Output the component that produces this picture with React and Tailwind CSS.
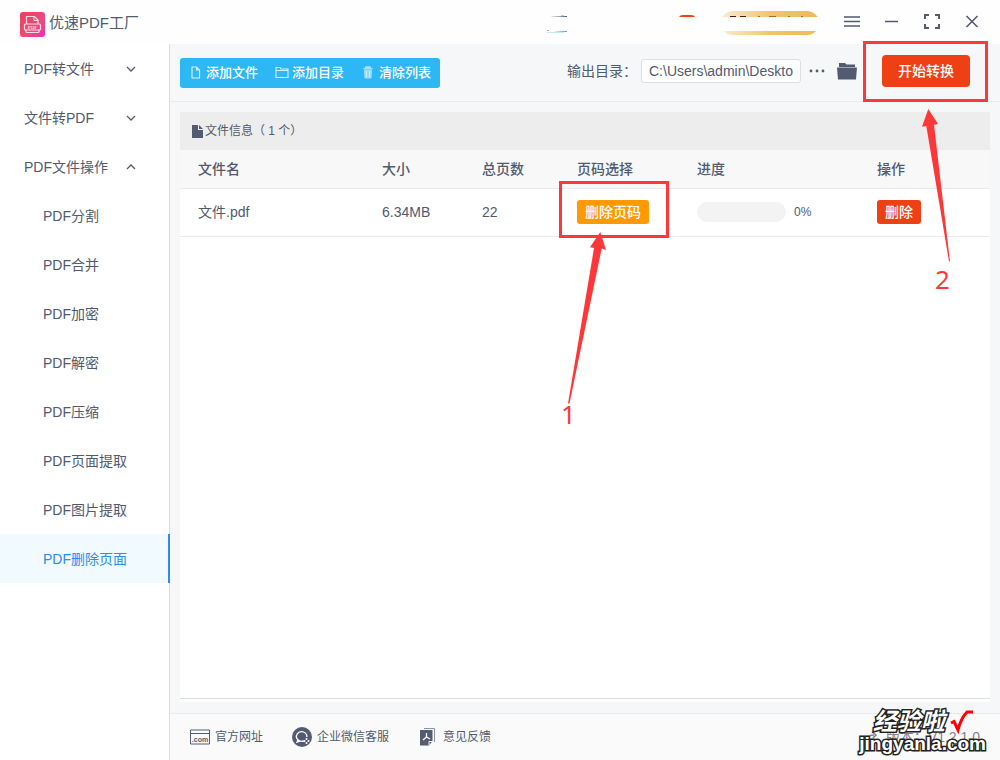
import clsx from "clsx";

const FONT = "font-['Liberation_Sans','Noto_Sans_CJK_SC',sans-serif]";

const menus = [
    { label: "PDF转文件", open: false },
    { label: "文件转PDF", open: false },
    { label: "PDF文件操作", open: true },
];

const operations = [
    "PDF分割",
    "PDF合并",
    "PDF加密",
    "PDF解密",
    "PDF压缩",
    "PDF页面提取",
    "PDF图片提取",
    "PDF删除页面",
];

const files = [
    { name: "文件.pdf", size: "6.34MB", pages: 22, progress: 0 },
];

function Logo() {
    return (
        <svg width="25" height="25" viewBox="0 0 25 25" fill="none">
            <defs>
                <linearGradient id="logo" x1="0" y1="0" x2="1" y2="1">
                    <stop offset="0" stopColor="#e8405c" />
                    <stop offset="0.6" stopColor="#ef4a7a" />
                    <stop offset="1" stopColor="#ee2fb0" />
                </linearGradient>
            </defs>
            <rect width="25" height="25" rx="3" fill="url(#logo)" />
            <path d="M6.5 12V4.5H14.5L18 8V12" stroke="#fbdde4" strokeWidth="1.2" />
            <path d="M14 4.5V8.5H18" stroke="#fbdde4" />
            <rect x="4.5" y="12" width="16" height="6" rx="1" stroke="#fbdde4" strokeWidth="1.2" />
            <path d="M6 18V19.5Q6 20.5 7 20.5H18Q19 20.5 19 19.5V18" stroke="#fbdde4" strokeWidth="1.2" />
            <text x="12.5" y="17" textAnchor="middle" fontSize="5" fontWeight="700" fontFamily="Liberation Serif" fill="#fbdde4">PDF</text>
        </svg>
    );
}

function Chevron({ up }) {
    return (
        <svg width="10" height="6" viewBox="0 0 10 6" fill="none" stroke="#535b72" strokeWidth="1.3">
            <path d={up ? "M1 5L5 1L9 5" : "M1 1L5 5L9 1"} />
        </svg>
    );
}

function Header() {
    return (
        <header className="flex h-11 items-center bg-[#fefefe] pr-5 pl-5">
            <div className="flex items-center gap-1 pt-1">
                <Logo />
                <h1 className="pb-[2px] text-[15px] leading-5">优速PDF工厂</h1>
            </div>
            <div className="ml-auto flex items-center">
                <svg width="274" height="24" viewBox="0 0 274 24" fill="none" className="mt-[2px]" aria-hidden="true">
                    <defs>
                        <linearGradient id="vip" x1="0" y1="0" x2="1" y2="0">
                            <stop offset="0" stopColor="#fbecd0" />
                            <stop offset="0.5" stopColor="#f1c56f" />
                            <stop offset="1" stopColor="#edb957" />
                        </linearGradient>
                        <linearGradient id="dark" x1="0" y1="0" x2="1" y2="0">
                            <stop offset="0" stopColor="#eef0f2" />
                            <stop offset="1" stopColor="#4d6077" />
                        </linearGradient>
                        <linearGradient id="teal" x1="0" y1="0" x2="1" y2="0">
                            <stop offset="0" stopColor="#d6eeee" />
                            <stop offset="1" stopColor="#5f9da3" />
                        </linearGradient>
                    </defs>
                    <rect x="6" y="5" width="16" height="1" fill="url(#dark)" />
                    <rect x="16" y="4" width="3" height="1" fill="#c3cbd3" />
                    <rect x="2" y="19" width="2" height="1" fill="#8cc3c0" />
                    <rect x="10" y="20" width="12" height="1" fill="url(#teal)" />
                    <rect x="2" y="21" width="17" height="1" fill="#c8ebe9" />
                    <path d="M134 6Q135 4 138 4H146Q149 4 150 6Z" fill="#ec3f14" />
                    <rect x="176" y="0" width="98" height="24" rx="12" fill="url(#vip)" />
                    <path d="M185 5.500H191M195 5.500H201" stroke="#4b1512" />
                    <path d="M213 5.500H215M224 5.500H231M243 5.500H245M256 5.500H258" stroke="#96703a" />
                    <rect x="150" y="6" width="124" height="14" fill="#fefefe" />
                </svg>
                <div className="ml-[25px] flex items-center gap-6 text-[#535b72]">
                    <button type="button" aria-label="菜单">
                        <svg width="16" height="16" viewBox="0 0 16 16" stroke="currentColor" strokeWidth="1.500">
                            <path d="M0 3H16M0 7.500H16M0 12H16" />
                        </svg>
                    </button>
                    <button type="button" aria-label="最小化">
                        <svg width="16" height="16" viewBox="0 0 16 16" stroke="currentColor" strokeWidth="1.500">
                            <path d="M1 7.500H14" />
                        </svg>
                    </button>
                    <button type="button" aria-label="最大化">
                        <svg width="16" height="16" viewBox="0 0 16 16" fill="none" stroke="currentColor" strokeWidth="2">
                            <path d="M1 5V1H5M11 1H15V5M15 10V14H11M5 14H1V10" />
                        </svg>
                    </button>
                    <button type="button" aria-label="关闭">
                        <svg width="16" height="16" viewBox="0 0 16 16" stroke="currentColor" strokeWidth="1.600">
                            <path d="M2.500 2L13.500 13M13.500 2L2.500 13" />
                        </svg>
                    </button>
                </div>
            </div>
        </header>
    );
}

function Sidebar() {
    return (
        <nav className="w-[170px] shrink-0 border-r border-[#dcdee2] bg-white text-sm">
            {menus.map((menu) => (
                <button key={menu.label} type="button" aria-expanded={menu.open} className="flex h-[49px] w-full items-center justify-between pr-[33px] pl-6">
                    {menu.label}
                    <Chevron up={menu.open} />
                </button>
            ))}
            <ul>
                {operations.map((op) => (
                    <li key={op}>
                        <a
                            href="#"
                            className={clsx(
                                "flex h-[49px] items-center pl-[43px]",
                                op === "PDF删除页面" && "-mr-px border-r-2 border-[#2d8cf0] bg-[#f0faff] text-[#2d8cf0]"
                            )}
                        >
                            {op}
                        </a>
                    </li>
                ))}
            </ul>
        </nav>
    );
}

function Toolbar() {
    return (
        <div className="flex h-[58px] shrink-0 items-center border-b border-[#e8eaec] pr-[30px] pl-[10px]">
            <div className="flex h-[30px] items-center gap-[17px] rounded-[3px] bg-[#2db7f5] pr-[9px] pl-2 text-[13px] font-medium text-white">
                <button type="button" className="flex items-center gap-1">
                    <svg width="14" height="13" viewBox="0 0 14 13" fill="none" stroke="#d5f1fd" strokeWidth="1.200">
                        <path d="M4 1H8.500L11.500 4V12H4ZM8.500 1V4H11.500" />
                    </svg>
                    添加文件
                </button>
                <button type="button" className="flex items-center gap-[3px]">
                    <svg width="14" height="13" viewBox="0 0 14 13" fill="none" stroke="#d5f1fd" strokeWidth="1.100">
                        <path d="M1 11.500V1.500H5L6 3H13V11.500ZM1 4.500H13" />
                    </svg>
                    添加目录
                </button>
                <button type="button" className="flex items-center gap-1">
                    <svg width="14" height="13" viewBox="0 0 14 13" fill="none" stroke="#a9e1fb">
                        <path d="M2.500 2.500H11.500M5 2V1H9V2" strokeWidth="1.400" />
                        <path d="M3.500 4H10.500L10 12H4Z" fill="#8fd8fa" />
                        <path d="M5.500 5V11M8.500 5V11" stroke="#c9edfd" />
                    </svg>
                    清除列表
                </button>
            </div>
            <div className="mb-1 ml-auto flex items-center">
                <label htmlFor="output" className="mr-1 text-sm">输出目录：</label>
                <input
                    id="output"
                    readOnly
                    defaultValue="C:\Users\admin\Deskto"
                    className="h-6 w-40 rounded-[3px] border border-[#dcdee2] bg-white px-[7px] text-sm"
                />
                <button type="button" aria-label="更多" className="ml-2">
                    <svg width="16" height="4" viewBox="0 0 16 4" fill="#535b72">
                        <circle cx="2" cy="2" r="1.400" />
                        <circle cx="8" cy="2" r="1.400" />
                        <circle cx="14" cy="2" r="1.400" />
                    </svg>
                </button>
                <button type="button" aria-label="打开目录" className="ml-3">
                    <svg width="20" height="18" viewBox="0 0 20 18" fill="#535b72">
                        <path d="M2 1H8L9.500 2.500H18V5H2Z" />
                        <path d="M0 5.500H20L19 17.500H1Z" />
                    </svg>
                </button>
                <div className="relative ml-[25px]">
                    <button type="button" className="block h-8 w-[88px] rounded-[4px] bg-[#ee4014] text-sm font-medium text-white">开始转换</button>
                    <div className="absolute -top-[14px] -left-[19px] h-[61px] w-[125px] border-3 border-[#fd3838]" />
                    <svg className="absolute top-[54px] left-[40px]" width="30" height="154" viewBox="0 0 30 154" fill="#fd3838">
                        <path d="M6.300 0L16 15L12 15.700L28 152.500H27L4.300 17L0 17.700Z" />
                    </svg>
                    <span className="absolute top-[206px] left-[53px] font-['Noto_Sans'] text-[26px] leading-9 text-[#fd3838]">2</span>
                </div>
            </div>
        </div>
    );
}

function FileTable() {
    return (
        <table className="w-full table-fixed text-left text-sm">
            <colgroup>
                <col className="w-[184px]" />
                <col className="w-[100px]" />
                <col className="w-[95px]" />
                <col className="w-[120px]" />
                <col />
                <col className="w-[131px]" />
            </colgroup>
            <thead className="bg-[#f8f8f9]">
                <tr className="h-[38px] border-b border-[#e8eaec]">
                    {["文件名", "大小", "总页数", "页码选择", "进度", "操作"].map((title) => (
                        <th key={title} className="pl-[18px] font-medium">{title}</th>
                    ))}
                </tr>
            </thead>
            <tbody>
                {files.map((file) => (
                    <tr key={file.name} className="h-12 border-b border-[#e8eaec]">
                        <td className="pl-[18px]">{file.name}</td>
                        <td className="pl-[18px]">{file.size}</td>
                        <td className="pl-[18px]">{file.pages}</td>
                        <td className="pl-[18px]">
                            <div className="relative w-[72px]">
                                <button type="button" className="block h-6 w-full rounded-[3px] bg-[#f90] font-medium text-white">删除页码</button>
                                <div className="absolute -top-[19px] -left-[18px] h-[57px] w-[110px] border-3 border-[#fd3838]" />
                                <svg className="absolute top-8 -left-[10px]" width="40" height="173" viewBox="0 0 40 173" fill="#fd3838">
                                    <path d="M33.300 0L39 18L34.700 16.500L2.500 171.500H1L27 16L23 15.300Z" />
                                </svg>
                                <span className="absolute top-[196px] -left-[16px] font-['Noto_Sans'] text-[26px] leading-9 text-[#fd3838]">1</span>
                            </div>
                        </td>
                        <td className="pl-[18px]">
                            <div className="flex items-center gap-2">
                                <div className="h-5 w-[89px] overflow-hidden rounded-full bg-[#f3f3f3]">
                                    <div className="h-full bg-[#2db7f5]" style={{ width: `${file.progress}%` }} />
                                </div>
                                <span className="text-xs">{file.progress}%</span>
                            </div>
                        </td>
                        <td className="pl-[18px]">
                            <button type="button" className="block h-6 w-11 rounded-[3px] bg-[#ee4014] font-medium text-white">删除</button>
                        </td>
                    </tr>
                ))}
            </tbody>
        </table>
    );
}

function Footer() {
    return (
        <footer className="relative flex h-[47px] shrink-0 items-center border-t border-[#e8eaec] bg-[#fafafa] pr-5 pl-5 text-xs">
            <a href="#" className="flex items-center gap-[5px]">
                <svg width="20" height="16" viewBox="0 0 20 16" fill="none" stroke="#535b72">
                    <path d="M0.500 1H19.500V15H0.500ZM0.500 4.500H19.500" />
                    <text x="10" y="13" textAnchor="middle" fontSize="7" fontWeight="700" fill="#535b72" stroke="none">.com</text>
                </svg>
                官方网址
            </a>
            <a href="#" className="ml-[29px] flex items-center gap-[5px]">
                <svg width="20" height="20" viewBox="0 0 20 20" fill="none">
                    <circle cx="10" cy="10" r="10" fill="#535b72" />
                    <path d="M12 13.800A5.300 4.800 0 1 1 14.900 10M6 13L5 15.200L8 14.200" stroke="#fff" strokeWidth="1.300" />
                    <circle cx="14.500" cy="12" r="1" fill="#fff" />
                    <circle cx="16.500" cy="14" r="1" fill="#fff" />
                    <circle cx="14.500" cy="16" r="1" fill="#fff" />
                    <circle cx="12.500" cy="14" r="1" fill="#fff" />
                </svg>
                企业微信客服
            </a>
            <a href="#" className="ml-[31px] flex items-center gap-2">
                <svg width="15" height="18" viewBox="0 0 15 18" fill="none">
                    <path d="M4 0.500H14.500V14" stroke="#8b91a1" />
                    <path d="M0 2H12.500V13L9 17.500H0Z" fill="#535b72" />
                    <path d="M9 17V13.500H12.500" stroke="#fafafa" />
                    <path d="M6.500 5V9L3 12M6.500 9L10 11" stroke="#fff" strokeWidth="1.300" />
                </svg>
                意见反馈
            </a>
            <span className="ml-auto flex items-center gap-2 text-sm text-[#7c8294]">
                <svg width="12" height="10" viewBox="0 0 12 10" fill="none" stroke="#7c8294" strokeWidth="1.500">
                    <path d="M1 8Q2 3 8 3M6 0L10 3L7 6" />
                </svg>
                版本：V1.2.1.0
            </span>
            <div className="absolute right-[14px] bottom-[6px] flex flex-col items-center font-bold text-white">
                <div className="flex items-center gap-1">
                    <span className="text-2xl leading-6 italic [-webkit-text-stroke:3px_#222] [paint-order:stroke_fill]">经验啦</span>
                    <svg width="24" height="24" viewBox="0 0 24 24" fill="none" stroke="#f00" strokeWidth="3">
                        <path d="M2 13L5 11.500L9 20Q12 8 18 2H24" />
                    </svg>
                </div>
                <span className="text-[19px] leading-5 [-webkit-text-stroke:3px_#222] [paint-order:stroke_fill]">jingyanla.com</span>
            </div>
        </footer>
    );
}

export default function App() {
    return (
        <div className={clsx("flex min-h-screen flex-col bg-white text-[#515a6e]", FONT)}>
            <Header />
            <div className="flex flex-1">
                <Sidebar />
                <main className="flex min-w-0 flex-1 flex-col bg-[#f5f7f9]">
                    <Toolbar />
                    <section className="mx-[10px] mt-[10px] mb-[11px] flex flex-1 flex-col bg-white pb-[3px]">
                        <div className="flex h-[38px] items-center bg-[#ededed] pl-3 text-xs">
                            <svg width="11" height="13" viewBox="0 0 11 13" fill="#535b72">
                                <path d="M0 0H6V5H11V13H0ZM7 0L11 4H7Z" />
                            </svg>
                            <h2 className="ml-[2px]">文件信息（ 1 个）</h2>
                        </div>
                        <div className="flex-1 border-b border-[#dcdee2]">
                            <FileTable />
                        </div>
                    </section>
                    <Footer />
                </main>
            </div>
        </div>
    );
}
